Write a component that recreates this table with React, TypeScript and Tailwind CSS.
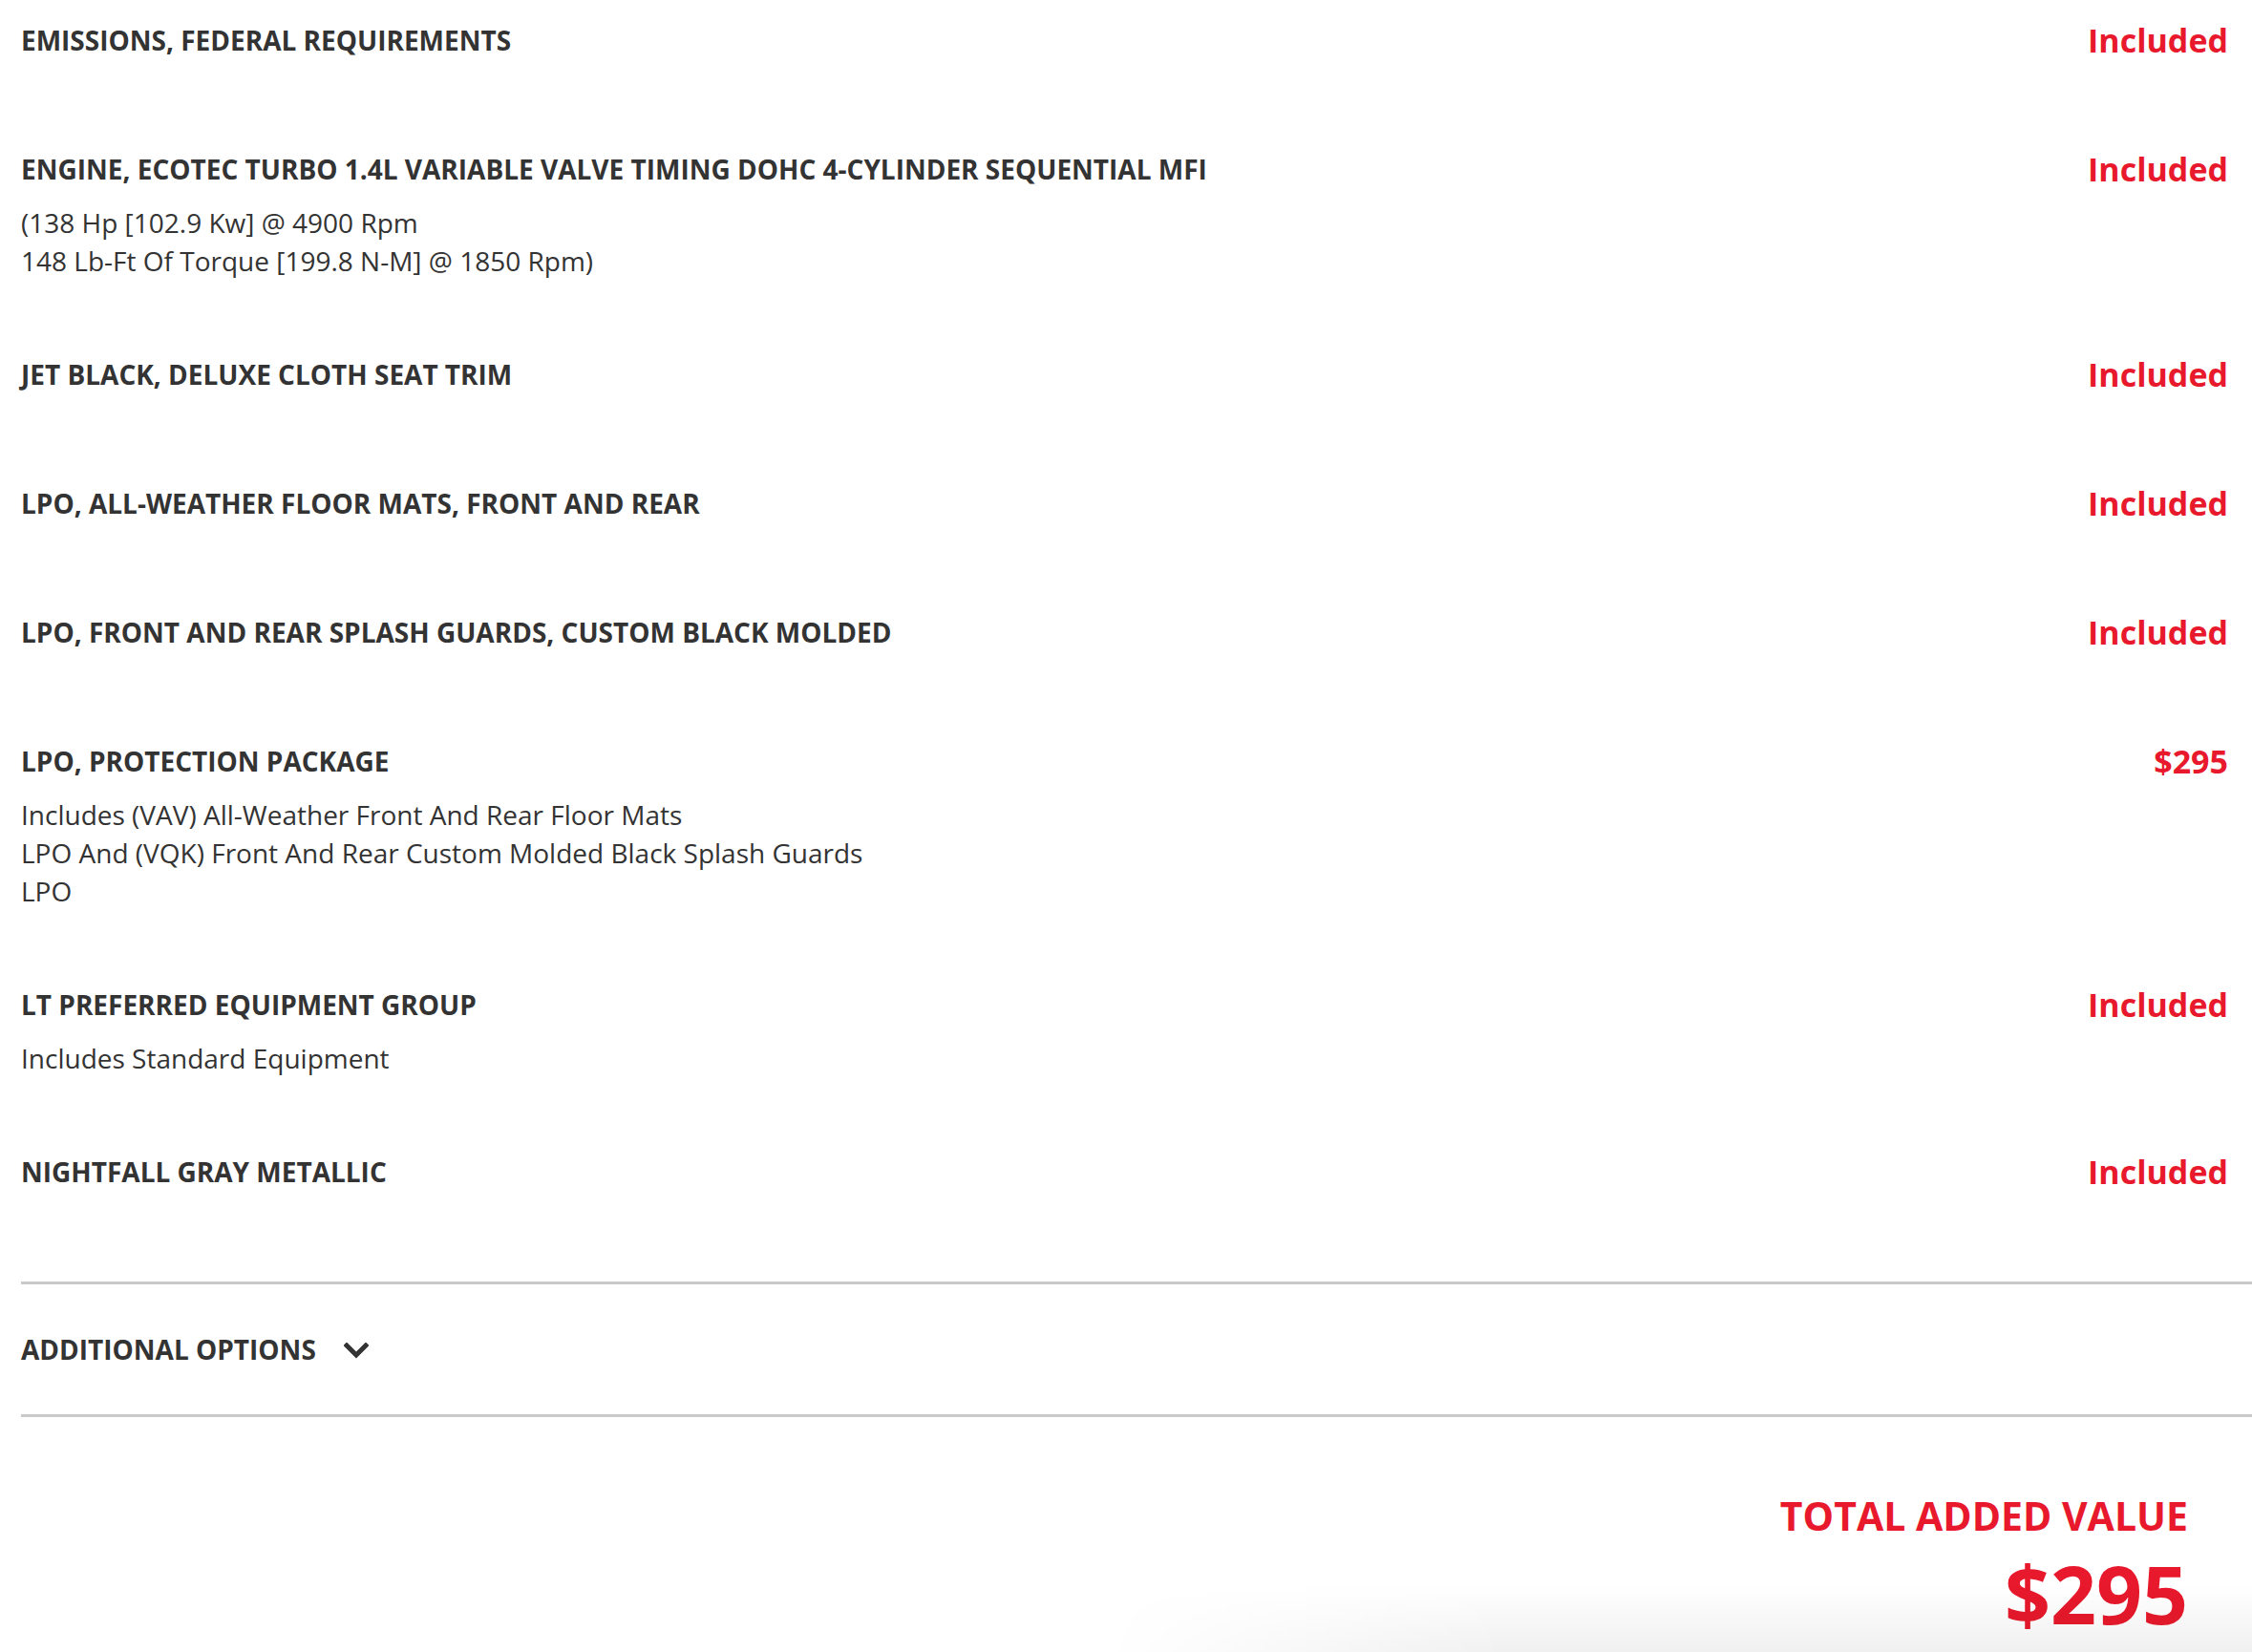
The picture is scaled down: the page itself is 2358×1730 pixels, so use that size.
import React from "react";

type Item = { title: string; price: string; desc?: string[] };

const items: Item[] = [
  { title: "EMISSIONS, FEDERAL REQUIREMENTS", price: "Included" },
  {
    title: "ENGINE, ECOTEC TURBO 1.4L VARIABLE VALVE TIMING DOHC 4-CYLINDER SEQUENTIAL MFI",
    price: "Included",
    desc: ["(138 Hp [102.9 Kw] @ 4900 Rpm", "148 Lb-Ft Of Torque [199.8 N-M] @ 1850 Rpm)"],
  },
  { title: "JET BLACK, DELUXE CLOTH SEAT TRIM", price: "Included" },
  { title: "LPO, ALL-WEATHER FLOOR MATS, FRONT AND REAR", price: "Included" },
  { title: "LPO, FRONT AND REAR SPLASH GUARDS, CUSTOM BLACK MOLDED", price: "Included" },
  {
    title: "LPO, PROTECTION PACKAGE",
    price: "$295",
    desc: [
      "Includes (VAV) All-Weather Front And Rear Floor Mats",
      "LPO And (VQK) Front And Rear Custom Molded Black Splash Guards",
      "LPO",
    ],
  },
  { title: "LT PREFERRED EQUIPMENT GROUP", price: "Included", desc: ["Includes Standard Equipment"] },
  { title: "NIGHTFALL GRAY METALLIC", price: "Included" },
];

export default function App() {
  return (
    <div
      className="relative min-h-[1730px] overflow-hidden bg-white text-[#333333]"
      style={{ fontFamily: '"Open Sans", "Liberation Sans", sans-serif' }}
    >
      <div className="pl-[22px]">
        <div className="flex flex-col">
          {items.map((it) => (
            <div key={it.title} className="flex justify-between pr-[25px] pt-[22px] pb-[57px]">
              <div className="flex flex-col">
                <div className="text-[28px] font-bold leading-[40px] mb-[16px]">{it.title}</div>
                {it.desc && (
                  <div className="flex flex-col">
                    {it.desc.map((d) => (
                      <div key={d} className="text-[28px] leading-[40px]">
                        {d}
                      </div>
                    ))}
                  </div>
                )}
              </div>
              <div className="text-[34px] font-bold leading-[40px] text-[#e8192c]">{it.price}</div>
            </div>
          ))}
        </div>

        <div className="mt-[22px] border-t-[3px] border-[#c9c9c9]" />
        <div className="flex h-[136px] items-center gap-[29px]">
          <span className="text-[28px] font-bold leading-[40px]">ADDITIONAL OPTIONS</span>
          <svg width="26" height="18" viewBox="0 0 26 18" className="mt-[4px]">
            <polyline
              points="3,3 13,13 23,3"
              fill="none"
              stroke="#333333"
              strokeWidth="5"
              strokeLinecap="square"
            />
          </svg>
        </div>
        <div className="border-t-[3px] border-[#c9c9c9]" />

        <div className="mt-[79px] flex flex-col items-end pr-[67px] text-[#e8192c]">
          <div className="text-[41px] font-bold leading-[48px]">TOTAL ADDED VALUE</div>
          <div className="mt-[16px] text-[84px] font-bold leading-[84px]">$295</div>
        </div>
      </div>

      <div className="pointer-events-none absolute bottom-0 right-0 h-[70px] w-[1200px] bg-[linear-gradient(to_bottom,rgba(0,0,0,0),rgba(0,0,0,0.06))] [mask-image:linear-gradient(to_right,transparent,black_35%)]" />
    </div>
  );
}
